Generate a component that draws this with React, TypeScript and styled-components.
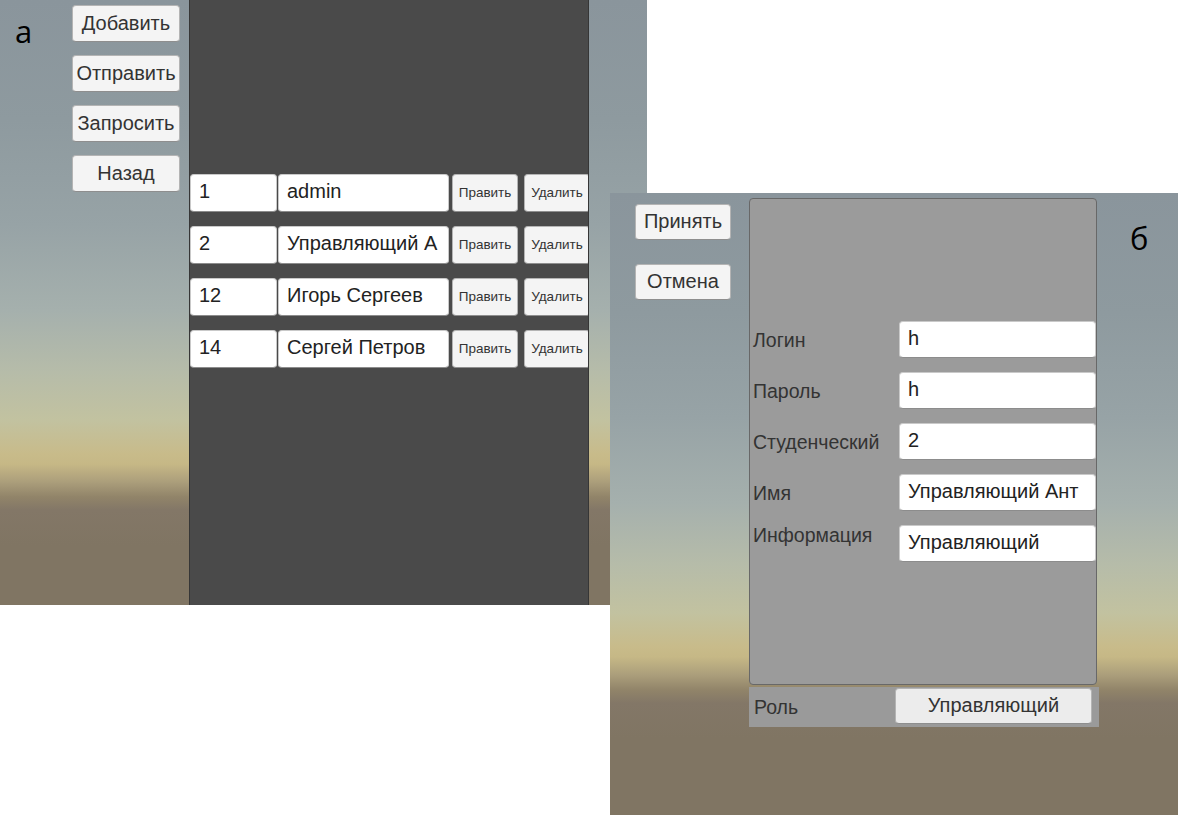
import React from "react";
import styled, { createGlobalStyle } from "styled-components";

const GlobalStyle = createGlobalStyle`
  html, body { margin: 0; padding: 0; background: #ffffff; }
  body { font-family: "Liberation Sans", Arial, sans-serif; }
  * { box-sizing: border-box; }
`;

const sky = `linear-gradient(to bottom,
  #8a959c 0px, #8e9a9f 120px, #97a3a6 225px, #a5b0ad 310px,
  #b6bca9 372px, #c2c2a0 420px, #c8bb8a 454px, #c6b886 464px,
  #ab9e7b 482px, #918469 497px, #837767 510px, #807563 545px, #807563 100%)`;

const Canvas = styled.div`
  position: relative;
  width: 1178px;
  height: 815px;
  overflow: hidden;
  background: #ffffff;
`;

const Shot = styled.div<{ $x: number; $y: number; $w: number; $h: number }>`
  position: absolute;
  left: ${(p) => p.$x}px;
  top: ${(p) => p.$y}px;
  width: ${(p) => p.$w}px;
  height: ${(p) => p.$h}px;
  background: ${sky};
  display: flex;
  overflow: hidden;
`;

const Letter = styled.div<{ $w: number; $pl: number; $pt: number }>`
  width: ${(p) => p.$w}px;
  flex: none;
  padding-left: ${(p) => p.$pl}px;
  padding-top: ${(p) => p.$pt}px;
  font-family: "Open Sans", "Noto Sans", sans-serif;
  font-size: 31px;
  line-height: 31px;
  color: #000;
`;

const ButtonColumn = styled.div<{ $w: number; $pt: number; $gap: number; $mr: number; $pl?: number }>`
  width: ${(p) => p.$w}px;
  flex: none;
  display: flex;
  flex-direction: column;
  gap: ${(p) => p.$gap}px;
  padding-top: ${(p) => p.$pt}px;
  padding-left: ${(p) => p.$pl ?? 0}px;
  margin-right: ${(p) => p.$mr}px;
`;

const UButton = styled.div<{ $h: number; $fs: number; $bg?: string; $w?: number }>`
  height: ${(p) => p.$h}px;
  ${(p) => (p.$w ? `width: ${p.$w}px;` : "")}
  flex: none;
  display: flex;
  align-items: center;
  justify-content: center;
  background: ${(p) => p.$bg ?? "#f4f4f4"};
  border: 1px solid #b4b4b4;
  border-bottom-color: #8e8e8e;
  border-radius: 4px;
  font-size: ${(p) => p.$fs}px;
  color: #333333;
  white-space: nowrap;
  overflow: hidden;
  padding-bottom: 1px;
`;

const DarkList = styled.div`
  width: 400px;
  height: 100%;
  flex: none;
  background: #4a4a4a;
  border-left: 1px solid #363636;
  border-right: 1px solid #363636;
  padding-top: 174px;
  display: flex;
  flex-direction: column;
  gap: 14px;
  overflow: hidden;
`;

const ListRow = styled.div`
  display: flex;
  height: 38px;
  flex: none;
`;

const Field = styled.div<{ $w: number; $ml?: number; $h?: number }>`
  width: ${(p) => p.$w}px;
  height: ${(p) => (p.$h ? `${p.$h}px` : "100%")};
  margin-left: ${(p) => p.$ml ?? 0}px;
  flex: none;
  background: #ffffff;
  border: 1px solid #c9c9c9;
  border-bottom-color: #8c8c8c;
  border-radius: 4px;
  padding: 0 0 3px 8px;
  display: flex;
  align-items: center;
  font-size: 20px;
  color: #222;
  white-space: nowrap;
  overflow: hidden;
`;

const RowButton = styled(UButton)<{ $ml: number }>`
  margin-left: ${(p) => p.$ml}px;
`;

const FormColumn = styled.div`
  width: 350px;
  flex: none;
  padding-top: 5px;
  display: flex;
  flex-direction: column;
  gap: 2px;
`;

const FormPanel = styled.div`
  width: 348px;
  height: 487px;
  background: #9b9b9b;
  border: 1px solid #686868;
  border-radius: 4px;
  padding-top: 122px;
  display: flex;
  flex-direction: column;
  gap: 14px;
`;

const FormRow = styled.div<{ $top?: boolean }>`
  display: grid;
  grid-template-columns: 149px 197px;
  align-items: ${(p) => (p.$top ? "start" : "center")};
  height: 37px;
`;

const FormLabel = styled.div`
  padding-left: 3px;
  font-size: 19.5px;
  color: #333;
  white-space: nowrap;
  line-height: 20px;
`;

const RoleBar = styled.div`
  width: 350px;
  height: 40px;
  background: #9a9a9a;
  display: flex;
  align-items: flex-start;
  padding-top: 1px;
`;

const RoleLabel = styled.div`
  width: 146px;
  flex: none;
  padding-left: 5px;
  padding-top: 8px;
  font-size: 19.5px;
  color: #333;
`;

const rows = [
  { id: "1", name: "admin" },
  { id: "2", name: "Управляющий А" },
  { id: "12", name: "Игорь Сергеев" },
  { id: "14", name: "Сергей Петров" },
];

const fields = [
  { label: "Логин", value: "h" },
  { label: "Пароль", value: "h" },
  { label: "Студенческий", value: "2" },
  { label: "Имя", value: "Управляющий Ант" },
  { label: "Информация", value: "Управляющий", top: true },
];

export default function App() {
  return (
    <>
      <GlobalStyle />
      <Canvas>
        <Shot $x={0} $y={0} $w={647} $h={605}>
          <Letter $w={72} $pl={15} $pt={16}>а</Letter>
          <ButtonColumn $w={108} $pt={5} $gap={13} $mr={9}>
            {["Добавить", "Отправить", "Запросить", "Назад"].map((t) => (
              <UButton key={t} $h={37} $fs={20}>
                {t}
              </UButton>
            ))}
          </ButtonColumn>
          <DarkList>
            {rows.map((r) => (
              <ListRow key={r.id}>
                <Field $w={87}>{r.id}</Field>
                <Field $w={171} $ml={1}>
                  {r.name}
                </Field>
                <RowButton $h={38} $fs={13.5} $w={66} $ml={3}>
                  Править
                </RowButton>
                <RowButton $h={38} $fs={13.5} $w={66} $ml={6}>
                  Удалить
                </RowButton>
              </ListRow>
            ))}
          </DarkList>
        </Shot>

        <Shot $x={610} $y={193} $w={568} $h={622}>
          <ButtonColumn $w={121} $pl={25} $pt={11} $gap={24} $mr={18}>
            <UButton $h={36} $fs={20}>Принять</UButton>
            <UButton $h={36} $fs={20}>Отмена</UButton>
          </ButtonColumn>
          <FormColumn>
            <FormPanel>
              {fields.map((f) => (
                <FormRow key={f.label} $top={f.top}>
                  <FormLabel>{f.label}</FormLabel>
                  <Field $w={197} $h={37}>
                    {f.value}
                  </Field>
                </FormRow>
              ))}
            </FormPanel>
            <RoleBar>
              <RoleLabel>Роль</RoleLabel>
              <UButton $h={36} $w={197} $fs={20} $bg="#ececec">
                Управляющий
              </UButton>
            </RoleBar>
          </FormColumn>
          <Letter $w={60} $pl={31} $pt={30}>б</Letter>
        </Shot>
      </Canvas>
    </>
  );
}
